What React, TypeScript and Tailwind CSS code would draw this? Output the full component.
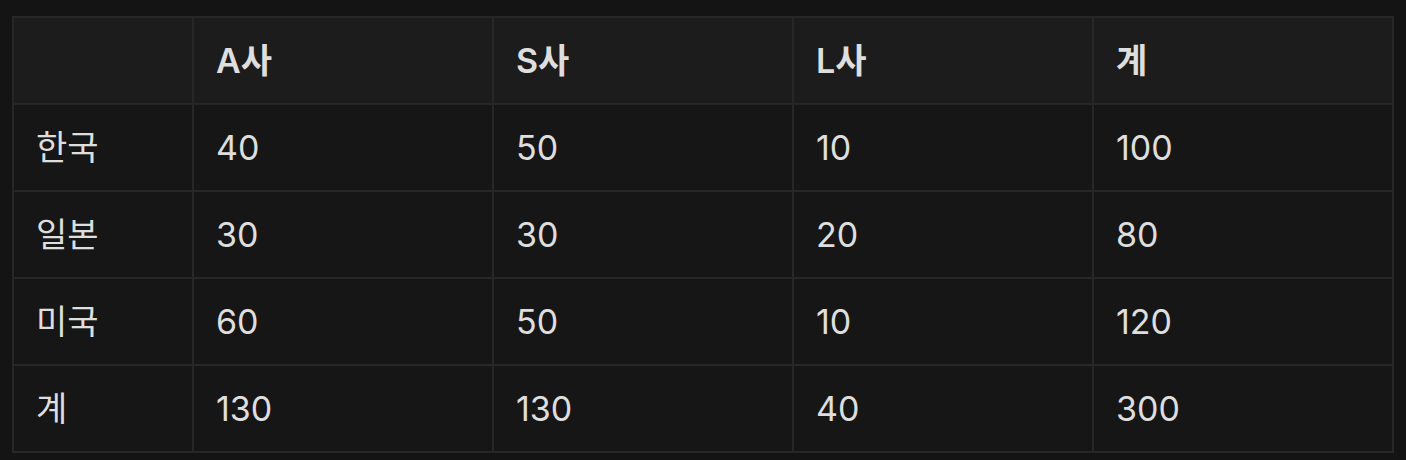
const header = ["", "A사", "S사", "L사", "계"]

const rows = [
  ["한국", "40", "50", "10", "100"],
  ["일본", "30", "30", "20", "80"],
  ["미국", "60", "50", "10", "120"],
  ["계", "130", "130", "40", "300"],
]

export default function App() {
  return (
    <div
      className="w-[1406px] h-[460px] bg-[#141414] pt-4 pl-3 text-[#dedede]"
      style={{ fontFamily: '"Inter", "Noto Sans CJK KR", sans-serif' }}
    >
      <table className="border-collapse border-2 border-[#272727] text-[34px] leading-none">
        <thead>
          <tr className="bg-[#1c1c1c] h-[87px]">
            {header.map((h, i) => (
              <th
                key={i}
                className={`border-2 border-[#272727] text-left font-semibold pl-[22px] ${i === 0 ? "w-[180px]" : "w-[300px]"}`}
              >
                {h}
              </th>
            ))}
          </tr>
        </thead>
        <tbody>
          {rows.map((r, ri) => (
            <tr key={ri} className="bg-[#161616] h-[87px]">
              {r.map((c, ci) => (
                <td key={ci} className="border-2 border-[#272727] pl-[22px]">
                  {c}
                </td>
              ))}
            </tr>
          ))}
        </tbody>
      </table>
    </div>
  )
}
